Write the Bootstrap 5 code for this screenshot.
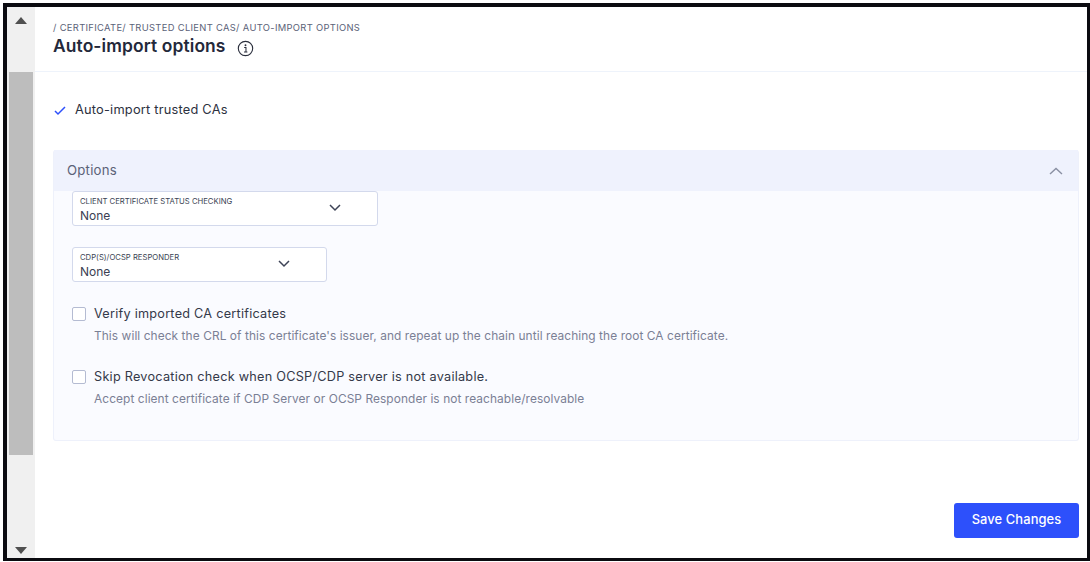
<!doctype html>
<html lang="en"><head><meta charset="utf-8"><title>Auto-import options</title>
<link rel="stylesheet" href="https://cdn.jsdelivr.net/npm/bootstrap@5.3.0/dist/css/bootstrap.min.css">
<style>
html,body{height:562px;overflow:hidden;background:#fff}
body{font-family:Inter,"Liberation Sans",sans-serif;color:#2c3140}
.shot{height:558px;width:1087px;margin-top:3px;margin-left:3px;border:solid #0b0b10;border-width:4px 3px 3px 4px}
.sbar{width:28px;background:#f0f0f0;padding-left:2px;padding-right:2px}
.sup,.sdown{height:65px;padding-top:10px;padding-left:6px}
.sdown{height:auto;padding-top:0;padding-bottom:4px;margin-top:auto}
.sthumb{height:383px;background:#bdbdbd}
.head{height:65px;padding:15px 0 0 18px;border-bottom:1px solid #eef3fb}
.crumb{font-size:9.4px;line-height:12px;color:#5b6278;letter-spacing:.32px}
.ttl{font-size:17.4px;line-height:22px;font-weight:600;color:#23283a;letter-spacing:.12px;margin-top:1px;gap:11px}
.autoimp{padding:30px 0 0 18px;font-size:12.8px;line-height:16px;height:78px;letter-spacing:.22px}
.optwrap{margin-left:18px;margin-right:8px;height:291px;background:#fafbff;border:1px solid #eef1fb;border-top:0;border-radius:3px}
.opthead{height:41px;background:#eff2fd;padding:0 15px 0 13px;font-size:13.2px;color:#5b6278;letter-spacing:.22px}
.pick{height:35px;background:#fff;border:1px solid #d3d9ec;border-radius:3px;margin-left:18px;padding:5px 0 0 7px;position:relative}
.pick1{width:306px}.pick2{width:255px;margin-top:21px}
.picklab{font-size:7.7px;line-height:10px;color:#3a3f52}
.pickval{font-size:12px;line-height:15px;color:#3b4052;margin-top:1px}
.pickarrow{position:absolute;top:12px}
.pick1 .pickarrow{left:256px}.pick2 .pickarrow{left:205px}
.chkrow{margin-left:18px;gap:8px}
.box{width:14px;height:14px;border:1.5px solid #b4bbd2;border-radius:2px;background:#fff;flex:none;margin-top:1px}
.chkt{font-size:12.7px;line-height:16px;color:#343949;letter-spacing:.24px}
.chkd{font-size:11.9px;line-height:15px;color:#7a8095;margin-top:6px;letter-spacing:.08px}
.r1{margin-top:24px}.r2{margin-top:26px}
.foot{padding-right:8px;margin-top:auto;padding-bottom:20px}
.savebtn{width:125px;height:35px;background:#2d50fb;color:#fff;border:0;border-radius:3px;font-size:12.9px;font-weight:500;padding:0 0 2px;letter-spacing:.1px}
.savebtn:hover{background:#2d50fb;color:#fff}
</style></head><body>
<div class="shot d-flex">
  <div class="sbar d-flex flex-column flex-shrink-0">
    <div class="sup"><svg width="12" height="7" viewBox="0 0 12 7" class="d-block"><path d="M6 0 12 7H0z" fill="#505050"/></svg></div>
    <div class="sthumb"></div>
    <div class="sdown"><svg width="12" height="7" viewBox="0 0 12 7" class="d-block"><path d="M0 0H12L6 7z" fill="#505050"/></svg></div>
  </div>
  <div class="flex-grow-1 d-flex flex-column">
    <div class="head">
      <div class="crumb">/ CERTIFICATE/ TRUSTED CLIENT CAS/ AUTO-IMPORT OPTIONS</div>
      <div class="ttl d-flex align-items-center">Auto-import options
        <svg width="17" height="17" viewBox="0 0 18 18" class="mt-1"><circle cx="9" cy="9" r="7.6" fill="none" stroke="#2a2e3c" stroke-width="1.2"/><circle cx="9" cy="5.6" r="1" fill="#2a2e3c"/><path d="M7.6 8h1.9v4.4M7.4 12.6h3.6" fill="none" stroke="#2a2e3c" stroke-width="1.1"/></svg>
      </div>
    </div>
    <div class="autoimp d-flex align-items-start gap-2">
      <svg width="14" height="16" viewBox="0 0 14 16" class="flex-shrink-0"><path d="M2 9 5 12 12 5" fill="none" stroke="#2d50fb" stroke-width="1.5"/></svg>
      <span>Auto-import trusted CAs</span>
    </div>
    <div class="optwrap">
      <div class="opthead d-flex align-items-center justify-content-between">Options
        <svg width="14" height="8" viewBox="0 0 14 8"><path d="M1 7 7 1.5 13 7" fill="none" stroke="#8a90a3" stroke-width="1.4"/></svg>
      </div>
      <div class="pick pick1"><div class="picklab">CLIENT CERTIFICATE STATUS CHECKING</div><div class="pickval">None</div>
        <svg class="pickarrow" width="12" height="8" viewBox="0 0 12 8"><path d="M1 1 6 6 11 1" fill="none" stroke="#3d4356" stroke-width="1.5"/></svg></div>
      <div class="pick pick2"><div class="picklab">CDP(S)/OCSP RESPONDER</div><div class="pickval">None</div>
        <svg class="pickarrow" width="12" height="8" viewBox="0 0 12 8"><path d="M1 1 6 6 11 1" fill="none" stroke="#3d4356" stroke-width="1.5"/></svg></div>
      <div class="chkrow r1 d-flex"><div class="box"></div><div><div class="chkt">Verify imported CA certificates</div><div class="chkd">This will check the CRL of this certificate's issuer, and repeat up the chain until reaching the root CA certificate.</div></div></div>
      <div class="chkrow r2 d-flex"><div class="box"></div><div><div class="chkt">Skip Revocation check when OCSP/CDP server is not available.</div><div class="chkd">Accept client certificate if CDP Server or OCSP Responder is not reachable/resolvable</div></div></div>
    </div>
    <div class="foot d-flex justify-content-end"><button type="button" class="btn savebtn">Save Changes</button></div>
  </div>
</div>
<script src="https://cdn.jsdelivr.net/npm/bootstrap@5.3.0/dist/js/bootstrap.bundle.min.js"></script>
</body></html>
